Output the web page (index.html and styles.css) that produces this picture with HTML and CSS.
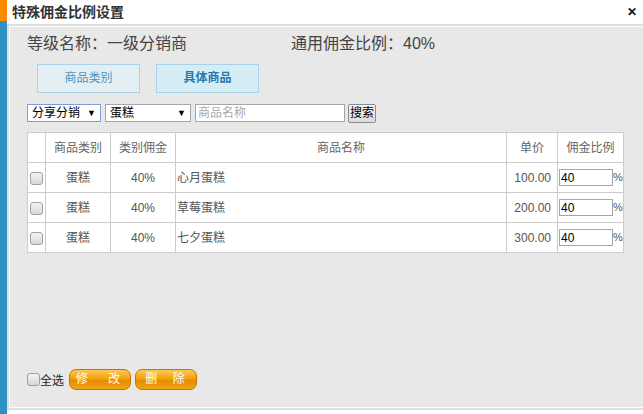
FILE: index.html
```html
<!DOCTYPE html>
<html lang="zh-CN">
<head>
    <meta charset="UTF-8">
    <title>特殊佣金比例设置</title>
    <link rel="stylesheet" href="styles.css">
</head>
<body>
    <div class="stripe">
        <div class="stripe-top"></div>
    </div>
    <div class="dialog">
        <div class="titlebar">
            <span class="title">特殊佣金比例设置</span>
            <span class="close">✕</span>
        </div>
        <div class="panel">
            <div class="info">
                <span class="level">等级名称：一级分销商</span>
                <span class="rate">通用佣金比例：40%</span>
            </div>
            <div class="tabs">
                <div class="tab">商品类别</div>
                <div class="tab active">具体商品</div>
            </div>
            <div class="filter">
                <label class="sel sel-focus">
                    <select class="w1"><option>分享分销</option></select>
                </label>
                <label class="sel">
                    <select class="w2"><option>蛋糕</option></select>
                </label>
                <input type="text" class="keyword" placeholder="商品名称">
                <button class="search">搜索</button>
            </div>
            <table class="goods">
                <colgroup>
                    <col style="width:18px">
                    <col style="width:65px">
                    <col style="width:65px">
                    <col>
                    <col style="width:51px">
                    <col style="width:66px">
                </colgroup>
                <thead>
                    <tr>
                        <th></th>
                        <th>商品类别</th>
                        <th>类别佣金</th>
                        <th>商品名称</th>
                        <th>单价</th>
                        <th>佣金比例</th>
                    </tr>
                </thead>
                <tbody>
                    <tr>
                        <td class="chk"><input type="checkbox" class="cb"></td>
                        <td class="center">蛋糕</td>
                        <td class="center">40%</td>
                        <td class="name">心月蛋糕</td>
                        <td class="price">100.00</td>
                        <td class="ratio"><input type="text" value="40">%</td>
                    </tr>
                    <tr>
                        <td class="chk"><input type="checkbox" class="cb"></td>
                        <td class="center">蛋糕</td>
                        <td class="center">40%</td>
                        <td class="name">草莓蛋糕</td>
                        <td class="price">200.00</td>
                        <td class="ratio"><input type="text" value="40">%</td>
                    </tr>
                    <tr>
                        <td class="chk"><input type="checkbox" class="cb"></td>
                        <td class="center">蛋糕</td>
                        <td class="center">40%</td>
                        <td class="name">七夕蛋糕</td>
                        <td class="price">300.00</td>
                        <td class="ratio"><input type="text" value="40">%</td>
                    </tr>
                </tbody>
            </table>
            <div class="footer">
                <label class="all"><input type="checkbox" class="cb">全选</label>
                <button class="btn btn-edit">修　改</button>
                <button class="btn btn-del">删 除</button>
            </div>
        </div>
    </div>
</body>
</html>
```

FILE: styles.css
```css
html, body {
    margin: 0;
    height: 100%;
    background: #fff;
}
body {
    display: flex;
    font-family: "Liberation Sans", "Noto Sans CJK SC", sans-serif;
    font-size: 12px;
    color: #555;
    overflow: hidden;
}
.stripe {
    width: 7px;
    flex: none;
    background: #2e93c0;
}
.stripe-top {
    height: 21px;
    background: #ff8a00;
}
.dialog {
    flex: 1;
    display: flex;
    flex-direction: column;
}
.titlebar {
    height: 24px;
    display: flex;
    align-items: center;
    justify-content: space-between;
    padding: 0 6px 0 5px;
}
.title {
    font-size: 14px;
    font-weight: bold;
    color: #333;
    line-height: 24px;
}
.close {
    font-size: 12px;
    font-weight: bold;
    color: #111;
}
.panel {
    height: 386px;
    box-sizing: border-box;
    background: #e8e8e8;
    border: 2px solid #dedede;
    border-right: none;
    box-shadow: inset 1px 1px 0 #fff, inset 0 -1px 0 #fff;
    padding: 6px 0 19px 18px;
    display: flex;
    flex-direction: column;
}
.info {
    display: flex;
    font-size: 16px;
    line-height: 24px;
    color: #444;
}
.level {
    width: 264px;
}
.tabs {
    display: flex;
    gap: 16px;
    margin: 8px 0 0 10px;
}
.tab {
    width: 101px;
    height: 27px;
    line-height: 27px;
    text-align: center;
    border: 1px solid #a9d3ea;
    background: #e4eff3;
    color: #4f93c4;
    font-size: 12px;
}
.tab.active {
    background: #d5eef6;
    color: #237ab3;
    font-weight: bold;
}
.filter {
    display: flex;
    align-items: center;
    margin-top: 11px;
    height: 18px;
}
.sel {
    position: relative;
    margin-right: 4px;
}
.sel::after {
    content: "▼";
    position: absolute;
    right: 5px;
    top: 1px;
    font-size: 9px;
    line-height: 16px;
    color: #000;
    pointer-events: none;
}
.sel select {
    appearance: none;
    height: 18px;
    box-sizing: border-box;
    border: 1px solid #a6a6a6;
    background: #fff;
    font-family: inherit;
    font-size: 12px;
    color: #000;
    padding: 0 0 0 4px;
    margin: 0;
    border-radius: 0;
    display: block;
}
.sel-focus select {
    border-color: #7b9ed6;
}
.w1 {
    width: 74px;
}
.w2 {
    width: 86px;
}
.keyword {
    width: 150px;
    height: 18px;
    box-sizing: border-box;
    border: 1px solid #a6a6a6;
    padding: 0 2px;
    font-family: inherit;
    font-size: 12px;
    margin: 0 3px 0 0;
}
.keyword::placeholder {
    color: #aaa;
}
.search {
    width: 28px;
    height: 19px;
    padding: 0;
    border: 1px solid #8a8a8a;
    border-radius: 2px;
    background: linear-gradient(#f6f6f6, #dcdcdc);
    font-family: inherit;
    font-size: 12px;
    color: #000;
    line-height: 16px;
}
.goods {
    margin-top: 10px;
    width: 597px;
    border-collapse: collapse;
    table-layout: fixed;
    background: #fff;
}
.goods th,
.goods td {
    border: 1px solid #ccc;
    height: 29px;
    padding: 0;
    font-weight: normal;
    color: #555;
    line-height: 16px;
}
.goods th {
    text-align: center;
    color: #666;
}
.center {
    text-align: center;
}
.name {
    padding-left: 1px !important;
}
.price {
    text-align: right;
    padding-right: 6px !important;
}
.chk {
    text-align: center;
}
.ratio {
    white-space: nowrap;
    font-size: 11px;
    padding-left: 1px !important;
}
.ratio input {
    width: 54px;
    height: 17px;
    box-sizing: border-box;
    border: 1px solid #a6a6a6;
    margin: 0;
    padding: 0 1px;
    font-family: inherit;
    font-size: 12px;
    color: #000;
    vertical-align: middle;
}
.cb {
    appearance: none;
    width: 13px;
    height: 13px;
    margin: 0;
    border: 1px solid #a0a0a0;
    border-radius: 3px;
    background: linear-gradient(#f3f3f3, #d8d8d8);
    vertical-align: middle;
}
.footer {
    margin-top: auto;
    display: flex;
    align-items: center;
    height: 20px;
}
.all {
    display: flex;
    align-items: center;
    color: #222;
    font-size: 12px;
    margin-right: 5px;
}
.btn {
    width: 62px;
    height: 21px;
    margin-right: 4px;
    padding: 0;
    border: 1px solid #c57500;
    border-radius: 7px;
    background: linear-gradient(#fbc955 0%, #f2a20e 45%, #e78b00 55%, #f0a519 100%);
    color: #fff;
    font-family: inherit;
    font-size: 12px;
    letter-spacing: 4px;
    line-height: 19px;
}
.btn-del {
    letter-spacing: 6px;
    text-indent: 4px;
}
```
